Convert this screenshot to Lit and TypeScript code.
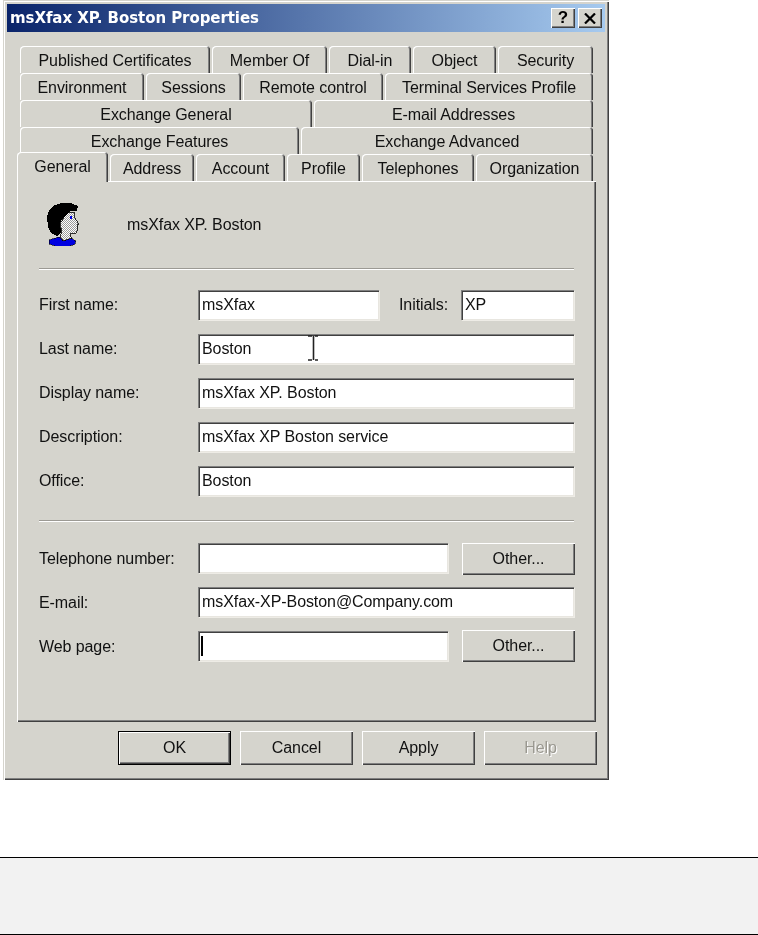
import { LitElement, html, css, svg } from "lit";
import { customElement } from "lit/decorators.js";

type Tab = [string, number];
const rows: Tab[][] = [
  [["Published Certificates", 190], ["Member Of", 115], ["Dial-in", 82], ["Object", 83], ["Security", 95]],
  [["Environment", 124], ["Sessions", 95], ["Remote control", 140], ["Terminal Services Profile", 208]],
  [["Exchange General", 292], ["E-mail Addresses", 279]],
  [["Exchange Features", 279], ["Exchange Advanced", 292]],
];
const front: Tab[] = [["Address", 84], ["Account", 89], ["Profile", 73], ["Telephones", 112], ["Organization", 117]];

const person = svg`<svg class="person" width="34" height="43" viewBox="0 0 34 43" shape-rendering="crispEdges">
  <defs><pattern id="d" width="2" height="2" patternUnits="userSpaceOnUse"><rect width="2" height="2" fill="#fff"/><rect width="1" height="1" fill="#9a9a9a"/><rect x="1" y="1" width="1" height="1" fill="#9a9a9a"/></pattern></defs>
  <path d="M2 37 L12 34 L16 38 L24 35 L29 38 L28 41 L23 43 L8 43 L2 41Z" fill="#0000e0" stroke="#000" stroke-width=".6"/>
  <path d="M21 9 L27 9 L28 15 L32 21 L30 22 L31 25 L29 30 L24 30 L23 33 L25 35 L16 38 L13 33 L15 28 L13 21 L17 14 Z" fill="url(#d)" stroke="#000" stroke-width=".8"/>
  <path d="M8 2 L15 0 L24 0 L31 3 L30 8 L24 8 L19 12 L16 15 L13 20 L14 30 L10 33 L4 30 L1 24 L0 14 L2 7 Z" fill="#000"/>
  <rect x="23" y="13" width="2" height="3" fill="#0000e0"/>
</svg>`;

@customElement("app-root")
export class AppRoot extends LitElement {
  static styles = css`
    :host { display: block; width: 758px; height: 935px; background: #fff; overflow: hidden;
      font-family: "Liberation Sans", Arial, sans-serif; font-size: 16px; letter-spacing: -0.08px; color: #111; }
    .window { box-sizing: border-box; width: 606px; height: 780px; margin-left: 3px; background: #d5d4cd;
      padding: 4px; box-shadow: inset 1px 1px 0 #d5d4cd, inset 2px 2px 0 #fff, inset -1px -1px 0 #404040, inset -2px -2px 0 #808080;
      display: flex; flex-direction: column; filter: blur(0.35px); }
    .title { height: 28px; flex: none; display: flex; align-items: center; padding: 0 3px; box-sizing: border-box;
      background: linear-gradient(90deg, #0a246a, #a6caef); }
    .title b { flex: 1; color: #fff; font: bold 15px "DejaVu Sans", sans-serif; letter-spacing: -0.07px; }
    .cap { width: 24px; height: 20px; box-sizing: border-box; background: #d5d4cd; display: flex; align-items: center; justify-content: center;
      font: bold 17px "Liberation Sans", sans-serif; color: #000;
      box-shadow: inset 1px 1px 0 #fff, inset -1px -1px 0 #404040, inset -2px -2px 0 #808080; }
    .cap.q { margin-right: 3px; }
    .tabs { margin: 14px 0 0 13px; width: 573px; display: flex; flex-direction: column; flex: none; }
    .row { display: flex; gap: 2px; height: 27px; }
    .tab { box-sizing: border-box; height: 27px; flex: none; display: flex; align-items: center; justify-content: center;
      background: #d5d4cd; border-radius: 4px 4px 0 0; padding-top: 3px;
      box-shadow: inset 1px 1px 0 #fff, inset -1px 0 0 #404040, inset -2px 0 0 #808080; }
    .front { margin-left: -3px; width: 576px; align-items: flex-end; height: 27px; position: relative; z-index: 1; }
    .tab.sel { position: relative; width: 91px; height: 30px; margin-top: -3px; padding: 0 0 1px; margin-bottom: -1px; z-index: 2; }
    .panel { box-sizing: border-box; margin-left: 10px; width: 579px; height: 541px; flex: none; padding: 22px 21px 0 22px;
      box-shadow: inset 1px 1px 0 #fff, inset -1px -1px 0 #404040, inset -2px -2px 0 #808080; display: flex; flex-direction: column; }
    .head { display: flex; align-items: center; height: 43px; margin-bottom: 22px; padding-left: 8px; }
    .person { margin-right: 46px; flex: none; }
    .sep { height: 2px; width: 535px; flex: none; background: linear-gradient(#9c9a94 0 1px, #fff 1px); }
    .fields { display: flex; flex-direction: column; gap: 14px; margin-top: 20px; }
    .line { display: flex; align-items: center; height: 30px; }
    .label { width: 159px; flex: none; padding-bottom: 1px; }
    .initials { width: 82px; padding: 0 0 1px 20px; box-sizing: border-box; flex: none; }
    .input { box-sizing: border-box; height: 30px; background: #fff; padding: 0 0 0 4px; display: flex; align-items: center; position: relative;
      white-space: nowrap; box-shadow: inset 1px 1px 0 #808080, inset 2px 2px 0 #404040, inset -1px -1px 0 #e8e6e0, 1px 1px 0 #eeece6; }
    .w181 { width: 181px; } .w113 { width: 113px; } .w376 { width: 376px; } .w250 { width: 250px; }
    .gapb { margin-left: 14px; }
    .ibeam { position: absolute; left: 109px; top: 1px; }
    .caret { position: absolute; left: 3px; top: 5px; width: 2px; height: 20px; background: #000; }
    .sep2 { margin-top: 24px; }
    .fields2 { margin-top: 21px; }
    .fields2 .label { padding: 2px 0 0; }
    .btn { box-sizing: border-box; width: 113px; flex: none; background: #d5d4cd; display: flex; align-items: center; justify-content: center;
      box-shadow: inset 1px 1px 0 #fff, inset -1px -1px 0 #404040, inset -2px -2px 0 #808080; }
    .other { height: 32px; }
    .low { align-self: flex-start; }
    .actions { display: flex; justify-content: flex-end; gap: 9px; margin: 9px 8px 0 0; }
    .actions .btn { height: 34px; }
    .ok { outline: 1px solid #000; outline-offset: -1px; box-shadow: inset 2px 2px 0 #fff, inset -2px -2px 0 #404040, inset -3px -3px 0 #808080; }
    .help { color: #9a9890; text-shadow: 1px 1px 0 #fff; }
    .band { box-sizing: border-box; height: 78px; margin-top: 77px; background: #f2f2f2; border-top: 1px solid #000; border-bottom: 1px solid #000; }
  `;

  private tab(t: Tab) {
    return html`<div class="tab" style="width:${t[1]}px">${t[0]}</div>`;
  }

  render() {
    return html`
      <div class="window">
        <div class="title"><b>msXfax XP. Boston Properties</b>
          <div class="cap q">?</div>
          <div class="cap"><svg width="12" height="11" viewBox="0 0 12 11"><path d="M1 .5 L11 10.5 M11 .5 L1 10.5" stroke="#000" stroke-width="2.2"/></svg></div>
        </div>
        <div class="tabs">
          ${rows.map((r) => html`<div class="row">${r.map((t) => this.tab(t))}</div>`)}
          <div class="row front">
            <div class="tab sel">General</div>
            ${front.map((t) => this.tab(t))}
          </div>
        </div>
        <div class="panel">
          <div class="head">${person}<span>msXfax XP. Boston</span></div>
          <div class="sep"></div>
          <div class="fields">
            <div class="line"><span class="label">First name:</span><div class="input w181">msXfax</div><span class="initials">Initials:</span><div class="input w113">XP</div></div>
            <div class="line"><span class="label">Last name:</span><div class="input w376">Boston
              <svg class="ibeam" width="12" height="26" viewBox="0 0 12 26"><path d="M1 1 H5 M8 1 H11 M6.5 1 V25 M1 25 H5 M8 25 H11" stroke="#222" stroke-width="1.6" fill="none"/></svg></div></div>
            <div class="line"><span class="label">Display name:</span><div class="input w376">msXfax XP. Boston</div></div>
            <div class="line"><span class="label">Description:</span><div class="input w376">msXfax XP Boston service</div></div>
            <div class="line"><span class="label">Office:</span><div class="input w376">Boston</div></div>
          </div>
          <div class="sep sep2"></div>
          <div class="fields fields2">
            <div class="line"><span class="label">Telephone number:</span><div class="input w250"></div><div class="btn other gapb low">Other...</div></div>
            <div class="line"><span class="label">E-mail:</span><div class="input w376">msXfax-XP-Boston@Company.com</div></div>
            <div class="line"><span class="label">Web page:</span><div class="input w250"><i class="caret"></i></div><div class="btn other gapb">Other...</div></div>
          </div>
        </div>
        <div class="actions">
          <div class="btn ok">OK</div><div class="btn">Cancel</div><div class="btn">Apply</div><div class="btn help">Help</div>
        </div>
      </div>
      <div class="band"></div>
    `;
  }
}
